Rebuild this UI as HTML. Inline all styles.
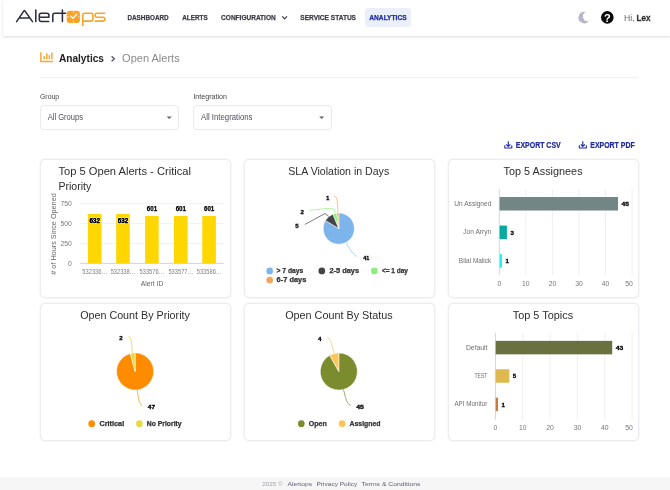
<!DOCTYPE html>
<html><head><meta charset="utf-8">
<style>
*{box-sizing:border-box;margin:0;padding:0}
html,body{width:670px;height:490px;overflow:hidden;background:#fff;font-family:"Liberation Sans",sans-serif;}
body{position:relative}
.abs{position:absolute;white-space:nowrap}
#nav{position:absolute;left:3px;top:0;width:667px;height:35.5px;background:#fff;box-shadow:0 1px 2.5px rgba(0,0,0,.15)}
.nv{position:absolute;top:13.5px;font-size:7.4px;font-weight:bold;color:#3b3b47;letter-spacing:0;line-height:8px;white-space:nowrap}
.card{position:absolute;width:191px;height:138px;background:#fff;border:1px solid #ededf1;border-radius:5px;box-shadow:0 0 2px rgba(60,60,90,.12)}
.sel{position:absolute;top:105px;height:24.5px;width:138.5px;border:1px solid #e9e9ee;border-radius:4px;background:#fff}
.lbl{position:absolute;top:92.5px;font-size:7px;color:#444;line-height:8px}
.selt{position:absolute;top:113px;font-size:8px;color:#5c5c6e;line-height:9px}
#footer{position:absolute;left:0;top:477px;width:670px;height:13px;background:#f6f6f7}
svg text{font-family:"Liberation Sans",sans-serif}
</style></head><body>
<div id="nav"></div>
<!-- CARDS -->
<div class="card" style="left:40px;top:159px;height:138.5px"></div>
<div class="card" style="left:244px;top:159px;height:138.5px"></div>
<div class="card" style="left:448px;top:159px;height:138.5px"></div>
<div class="card" style="left:40px;top:303px"></div>
<div class="card" style="left:244px;top:303px"></div>
<div class="card" style="left:448px;top:303px"></div>
<div class="abs" style="left:40px;top:77px;width:598px;height:1px;background:#efeff2"></div>
<div class="sel" style="left:40px"></div>
<div class="sel" style="left:193px"></div>
<div id="footer"></div>
<svg id="ov" class="abs" style="left:0;top:0;will-change:transform" width="670" height="490" viewBox="0 0 670 490">
<text x="127.4" y="20.4" font-size="7.4" fill="#3a3a46" font-weight="bold" text-anchor="start" textLength="41.3" lengthAdjust="spacingAndGlyphs" stroke="#3a3a46" stroke-width="0.25">DASHBOARD</text>
<text x="182.2" y="20.4" font-size="7.4" fill="#3a3a46" font-weight="bold" text-anchor="start" textLength="25.5" lengthAdjust="spacingAndGlyphs" stroke="#3a3a46" stroke-width="0.25">ALERTS</text>
<text x="221.1" y="20.4" font-size="7.4" fill="#3a3a46" font-weight="bold" text-anchor="start" textLength="54.6" lengthAdjust="spacingAndGlyphs" stroke="#3a3a46" stroke-width="0.25">CONFIGURATION</text>
<path d="M282.2 16.3L284.6 18.8L287 16.3" stroke="#3a3a46" fill="none" stroke-width="1.2" />
<text x="300.3" y="20.4" font-size="7.4" fill="#3a3a46" font-weight="bold" text-anchor="start" textLength="55.7" lengthAdjust="spacingAndGlyphs" stroke="#3a3a46" stroke-width="0.25">SERVICE STATUS</text>
<rect x="365" y="8" width="46" height="19" rx="3.5" fill="#ebeffa"/>
<text x="369.3" y="20.4" font-size="7.4" fill="#1d2a9c" font-weight="bold" text-anchor="start" textLength="37.3" lengthAdjust="spacingAndGlyphs" stroke="#1d2a9c" stroke-width="0.25">ANALYTICS</text>
<path d="M585.7 12.1A5.7 5.7 0 1 0 588.9 20.9A4.7 4.7 0 0 1 585.7 12.1Z" stroke="none" fill="#b7b7ca" stroke-width="1" />
<circle cx="607.3" cy="17.4" r="6.3" fill="#0a0a0a"/>
<text x="607.3" y="21.5" font-size="11" fill="#fff" font-weight="bold" text-anchor="middle" >?</text>
<text x="624" y="20.5" font-size="8.9" fill="#6a6a6a" font-weight="normal" text-anchor="start" textLength="10.6" lengthAdjust="spacingAndGlyphs" >Hi,</text>
<text x="636.6" y="20.5" font-size="8.9" fill="#333" font-weight="bold" text-anchor="start" textLength="14" lengthAdjust="spacingAndGlyphs" stroke="#333" stroke-width="0.3">Lex</text>
<path d="M16.6 21.6L24.1 10.6Q24.4 10.2 24.7 10.6L32.5 21.6M19.6 17.9H29.7" stroke="#2b2d42" fill="none" stroke-width="1.55" stroke-linecap="round" stroke-linejoin="round"/>
<path d="M35.8 10.1V21.6" stroke="#2b2d42" fill="none" stroke-width="1.55" stroke-linecap="round"/>
<path d="M39.3 17.3H48.9V15.2Q48.9 13.2 46.9 13.2H41.3Q39.3 13.2 39.3 15.2V19.4Q39.3 21.4 41.3 21.4H48.7" stroke="#2b2d42" fill="none" stroke-width="1.55" stroke-linecap="round" stroke-linejoin="round"/>
<path d="M52.8 21.6V15.2Q52.8 13.2 54.8 13.2H58.6" stroke="#2b2d42" fill="none" stroke-width="1.55" stroke-linecap="round"/>
<path d="M62.4 10.1V21.6M59.4 13.3H65.6" stroke="#2b2d42" fill="none" stroke-width="1.55" stroke-linecap="round"/>
<rect x="66.7" y="10.8" width="13.3" height="12.2" rx="3" fill="#f7a428"/>
<path d="M70.8 16.2L73 18.3L76.7 14.1" stroke="#fff" fill="none" stroke-width="1.3" stroke-linecap="round" stroke-linejoin="round"/>
<path d="M73.4 11.2V12.8M73.4 21V22.6M67.2 16.9H68.8M78 16.9H79.6" stroke="#fff" fill="none" stroke-width="0.7" />
<path d="M82.8 25.4V15.3Q82.8 13.3 84.8 13.3H90.9Q92.9 13.3 92.9 15.3V19.1Q92.9 21.1 90.9 21.1H83" stroke="#f7a428" fill="none" stroke-width="1.55" stroke-linecap="round" stroke-linejoin="round"/>
<path d="M104.8 13.3H97Q95.1 13.3 95.1 15.2Q95.1 17.2 97 17.2H103Q104.9 17.2 104.9 19.1Q104.9 21.1 103 21.1H95.1" stroke="#f7a428" fill="none" stroke-width="1.55" stroke-linecap="round" stroke-linejoin="round"/>
<path d="M40.9 52.3V61.5H53.2" stroke="#f7a836" fill="none" stroke-width="1.5" />
<rect x="43.3" y="56.3" width="1.6" height="2.8" fill="#f7a836" />
<rect x="46" y="53.4" width="1.6" height="5.7" fill="#f7a836" />
<rect x="48.6" y="55.2" width="1.5" height="3.9" fill="#f7a836" />
<rect x="51.1" y="52.6" width="1.5" height="6.5" fill="#f7a836" />
<text x="58.9" y="62" font-size="10.6" fill="#222" font-weight="bold" text-anchor="start" textLength="45.1" lengthAdjust="spacingAndGlyphs" >Analytics</text>
<path d="M111.6 56.2L114.4 58.7L111.6 61.2" stroke="#4c4c66" fill="none" stroke-width="1.2" />
<text x="122.1" y="62" font-size="10.6" fill="#8a8a8a" font-weight="normal" text-anchor="start" textLength="57.6" lengthAdjust="spacingAndGlyphs" >Open Alerts</text>
<text x="40" y="99.1" font-size="7.2" fill="#444" font-weight="normal" text-anchor="start" textLength="19.1" lengthAdjust="spacingAndGlyphs" >Group</text>
<text x="193.4" y="99.1" font-size="7.2" fill="#444" font-weight="normal" text-anchor="start" textLength="33.6" lengthAdjust="spacingAndGlyphs" >Integration</text>
<text x="47.7" y="119.6" font-size="8.7" fill="#4f4f60" font-weight="normal" text-anchor="start" textLength="35.3" lengthAdjust="spacingAndGlyphs" >All Groups</text>
<text x="201" y="119.6" font-size="8.7" fill="#4f4f60" font-weight="normal" text-anchor="start" textLength="51.5" lengthAdjust="spacingAndGlyphs" >All Integrations</text>
<path d="M166.6 116.4H171.8L169.2 119Z" stroke="none" fill="#666" stroke-width="1" />
<path d="M319.1 116.4H324.3L321.7 119Z" stroke="none" fill="#666" stroke-width="1" />
<path d="M508.3 141.2V146.2M506.2 144.29999999999998L508.3 146.39999999999998L510.40000000000003 144.29999999999998" stroke="#1f2b9e" fill="none" stroke-width="1.1" />
<path d="M504.8 145.29999999999998V147.89999999999998H511.8V145.29999999999998" stroke="#1f2b9e" fill="none" stroke-width="1.05" stroke-linejoin="round"/>
<path d="M582.8 141.2V146.2M580.6999999999999 144.29999999999998L582.8 146.39999999999998L584.9 144.29999999999998" stroke="#1f2b9e" fill="none" stroke-width="1.1" />
<path d="M579.3 145.29999999999998V147.89999999999998H586.3V145.29999999999998" stroke="#1f2b9e" fill="none" stroke-width="1.05" stroke-linejoin="round"/>
<text x="515.8" y="147.6" font-size="8.2" fill="#1f2b9e" font-weight="bold" text-anchor="start" textLength="44.9" lengthAdjust="spacingAndGlyphs" stroke="#1f2b9e" stroke-width="0.2">EXPORT CSV</text>
<text x="590.3" y="147.6" font-size="8.2" fill="#1f2b9e" font-weight="bold" text-anchor="start" textLength="44.4" lengthAdjust="spacingAndGlyphs" stroke="#1f2b9e" stroke-width="0.2">EXPORT PDF</text>
<text x="58.4" y="175" font-size="10.2" fill="#2e2e2e" font-weight="normal" text-anchor="start" textLength="132.6" lengthAdjust="spacingAndGlyphs" >Top 5 Open Alerts - Critical</text>
<text x="58.4" y="190.3" font-size="10.2" fill="#2e2e2e" font-weight="normal" text-anchor="start" textLength="32.8" lengthAdjust="spacingAndGlyphs" >Priority</text>
<text x="288.3" y="175" font-size="10.2" fill="#2e2e2e" font-weight="normal" text-anchor="start" textLength="100.9" lengthAdjust="spacingAndGlyphs" >SLA Violation in Days</text>
<text x="503.6" y="175" font-size="10.2" fill="#2e2e2e" font-weight="normal" text-anchor="start" textLength="79" lengthAdjust="spacingAndGlyphs" >Top 5 Assignees</text>
<text x="80.2" y="318.8" font-size="10.2" fill="#2e2e2e" font-weight="normal" text-anchor="start" textLength="109.7" lengthAdjust="spacingAndGlyphs" >Open Count By Priority</text>
<text x="285.2" y="318.8" font-size="10.2" fill="#2e2e2e" font-weight="normal" text-anchor="start" textLength="107.5" lengthAdjust="spacingAndGlyphs" >Open Count By Status</text>
<text x="512.7" y="318.8" font-size="10.2" fill="#2e2e2e" font-weight="normal" text-anchor="start" textLength="60.5" lengthAdjust="spacingAndGlyphs" >Top 5 Topics</text>
<line x1="80.3" y1="203.8" x2="223.8" y2="203.8" stroke="#efeff2" stroke-width="1"/>
<text x="71.8" y="206.10000000000002" font-size="6.8" fill="#777" font-weight="normal" text-anchor="end" >750</text>
<line x1="80.3" y1="223.7" x2="223.8" y2="223.7" stroke="#efeff2" stroke-width="1"/>
<text x="71.8" y="226.0" font-size="6.8" fill="#777" font-weight="normal" text-anchor="end" >500</text>
<line x1="80.3" y1="243.6" x2="223.8" y2="243.6" stroke="#efeff2" stroke-width="1"/>
<text x="71.8" y="245.9" font-size="6.8" fill="#777" font-weight="normal" text-anchor="end" >250</text>
<line x1="80.3" y1="263.4" x2="223.8" y2="263.4" stroke="#ccd6eb" stroke-width="1"/>
<text x="71.8" y="265.7" font-size="6.8" fill="#777" font-weight="normal" text-anchor="end" >0</text>
<text transform="translate(55.5 234) rotate(-90)" font-size="7.5" fill="#666" text-anchor="middle" textLength="81.4" lengthAdjust="spacingAndGlyphs"># of Hours Since Opened</text>
<rect x="87.9" y="214.0" width="13.6" height="49.39999999999998" fill="#ffd700" />
<text x="94.75" y="223" font-size="6.6" fill="#000" font-weight="bold" text-anchor="middle" textLength="10.4" lengthAdjust="spacingAndGlyphs" stroke="#fff" stroke-width="1.1" paint-order="stroke">632</text>
<text x="94.75" y="223" font-size="6.6" fill="#000" font-weight="bold" text-anchor="middle" textLength="10.4" lengthAdjust="spacingAndGlyphs" stroke="#000" stroke-width="0.25">632</text>
<text x="94.75" y="274.2" font-size="6.9" fill="#808080" font-weight="normal" text-anchor="middle" textLength="24.8" lengthAdjust="spacingAndGlyphs" >532336…</text>
<rect x="116.2" y="214.0" width="13.6" height="49.39999999999998" fill="#ffd700" />
<text x="123.05" y="223" font-size="6.6" fill="#000" font-weight="bold" text-anchor="middle" textLength="10.4" lengthAdjust="spacingAndGlyphs" stroke="#fff" stroke-width="1.1" paint-order="stroke">632</text>
<text x="123.05" y="223" font-size="6.6" fill="#000" font-weight="bold" text-anchor="middle" textLength="10.4" lengthAdjust="spacingAndGlyphs" stroke="#000" stroke-width="0.25">632</text>
<text x="123.05" y="274.2" font-size="6.9" fill="#808080" font-weight="normal" text-anchor="middle" textLength="24.8" lengthAdjust="spacingAndGlyphs" >532338…</text>
<rect x="145.1" y="216.0" width="13.6" height="47.39999999999998" fill="#ffd700" />
<text x="151.95" y="211.3" font-size="6.6" fill="#000" font-weight="bold" text-anchor="middle" textLength="10.4" lengthAdjust="spacingAndGlyphs" stroke="#000" stroke-width="0.25">601</text>
<text x="151.95" y="274.2" font-size="6.9" fill="#808080" font-weight="normal" text-anchor="middle" textLength="24.8" lengthAdjust="spacingAndGlyphs" >533576…</text>
<rect x="174.0" y="216.0" width="13.6" height="47.39999999999998" fill="#ffd700" />
<text x="180.85" y="211.3" font-size="6.6" fill="#000" font-weight="bold" text-anchor="middle" textLength="10.4" lengthAdjust="spacingAndGlyphs" stroke="#000" stroke-width="0.25">601</text>
<text x="180.85" y="274.2" font-size="6.9" fill="#808080" font-weight="normal" text-anchor="middle" textLength="24.8" lengthAdjust="spacingAndGlyphs" >533577…</text>
<rect x="202.3" y="216.0" width="13.6" height="47.39999999999998" fill="#ffd700" />
<text x="209.15" y="211.3" font-size="6.6" fill="#000" font-weight="bold" text-anchor="middle" textLength="10.4" lengthAdjust="spacingAndGlyphs" stroke="#000" stroke-width="0.25">601</text>
<text x="209.15" y="274.2" font-size="6.9" fill="#808080" font-weight="normal" text-anchor="middle" textLength="24.8" lengthAdjust="spacingAndGlyphs" >533586…</text>
<text x="152" y="285.6" font-size="7.4" fill="#666" font-weight="normal" text-anchor="middle" textLength="22.7" lengthAdjust="spacingAndGlyphs" >Alert ID</text>
<path d="M338.8 228.6L338.80 213.00A15.6 15.6 0 1 1 325.46 220.51Z" stroke="#fff" fill="#7cb5ec" stroke-width="0.5" stroke-linejoin="round"/>
<path d="M338.8 228.6L325.46 220.51A15.6 15.6 0 0 1 332.95 214.14Z" stroke="#fff" fill="#434348" stroke-width="0.5" stroke-linejoin="round"/>
<path d="M338.8 228.6L332.95 214.14A15.6 15.6 0 0 1 336.81 213.13Z" stroke="#fff" fill="#90ed7d" stroke-width="0.5" stroke-linejoin="round"/>
<path d="M338.8 228.6L336.81 213.13A15.6 15.6 0 0 1 338.80 213.00Z" stroke="#fff" fill="#f7a35c" stroke-width="0.5" stroke-linejoin="round"/>
<path d="M346.5 242.5C348.5 248 352.5 254 357.1 256.6" stroke="#7cb5ec" fill="none" stroke-width="0.6" />
<path d="M304.8 224.5L325 213.5L328.7 216.3" stroke="#434348" fill="none" stroke-width="0.7" />
<path d="M309.8 210.4C318 209.5 324 208.5 329.6 208.5C334 208.5 334.5 210 335.1 213.5" stroke="#90ed7d" fill="none" stroke-width="0.7" />
<path d="M333.9 196C337.5 196 338 205 337.9 213.5" stroke="#f7a35c" fill="none" stroke-width="0.7" />
<text x="366.3" y="259.6" font-size="6.1" fill="#000" font-weight="bold" text-anchor="middle" textLength="6.1" lengthAdjust="spacingAndGlyphs" stroke="#000" stroke-width="0.3">41</text>
<text x="297" y="227.8" font-size="6.1" fill="#000" font-weight="bold" text-anchor="middle" stroke="#000" stroke-width="0.3">5</text>
<text x="302.3" y="214.1" font-size="6.1" fill="#000" font-weight="bold" text-anchor="middle" stroke="#000" stroke-width="0.3">2</text>
<text x="327.7" y="199.7" font-size="6.1" fill="#000" font-weight="bold" text-anchor="middle" stroke="#000" stroke-width="0.3">1</text>
<circle cx="269.7" cy="270.9" r="3.35" fill="#7cb5ec"/>
<text x="276.6" y="273.29999999999995" font-size="6.3" fill="#333" font-weight="bold" text-anchor="start" textLength="26.6" lengthAdjust="spacingAndGlyphs" stroke="#333" stroke-width="0.25">&gt; 7 days</text>
<circle cx="321.8" cy="270.9" r="3.35" fill="#434348"/>
<text x="329.4" y="273.29999999999995" font-size="6.3" fill="#333" font-weight="bold" text-anchor="start" textLength="29.6" lengthAdjust="spacingAndGlyphs" stroke="#333" stroke-width="0.25">2-5 days</text>
<circle cx="374.3" cy="270.9" r="3.35" fill="#90ed7d"/>
<text x="381.9" y="273.29999999999995" font-size="6.3" fill="#333" font-weight="bold" text-anchor="start" textLength="26.1" lengthAdjust="spacingAndGlyphs" stroke="#333" stroke-width="0.25">&lt;= 1 day</text>
<circle cx="269.7" cy="280.0" r="3.35" fill="#f7a35c"/>
<text x="276.6" y="282.4" font-size="6.3" fill="#333" font-weight="bold" text-anchor="start" textLength="29.7" lengthAdjust="spacingAndGlyphs" stroke="#333" stroke-width="0.25">6-7 days</text>
<path d="M135.1 371.45L135.10 352.85A18.6 18.6 0 1 1 130.38 353.46Z" stroke="#fff" fill="#ff8c00" stroke-width="0.5" stroke-linejoin="round"/>
<path d="M135.1 371.45L130.38 353.46A18.6 18.6 0 0 1 135.10 352.85Z" stroke="#fff" fill="#e3d94a" stroke-width="0.5" stroke-linejoin="round"/>
<path d="M128.2 336.2C131.5 336.5 132 346 132.3 353" stroke="#e9cf4a" fill="none" stroke-width="0.7" />
<path d="M137.2 390C138.5 398 139 404.5 142.4 405.8" stroke="#ff8c00" fill="none" stroke-width="0.7" />
<text x="120.9" y="340.0" font-size="6.1" fill="#000" font-weight="bold" text-anchor="middle" stroke="#000" stroke-width="0.3">2</text>
<text x="151.5" y="409.1" font-size="6.1" fill="#000" font-weight="bold" text-anchor="middle" textLength="7.3" lengthAdjust="spacingAndGlyphs" stroke="#000" stroke-width="0.3">47</text>
<circle cx="91.7" cy="423.7" r="3.35" fill="#ff8c00"/>
<text x="99.5" y="426.09999999999997" font-size="6.3" fill="#333" font-weight="bold" text-anchor="start" textLength="24.7" lengthAdjust="spacingAndGlyphs" stroke="#333" stroke-width="0.25">Critical</text>
<circle cx="139.4" cy="423.7" r="3.35" fill="#e3d94a"/>
<text x="146.8" y="426.09999999999997" font-size="6.3" fill="#333" font-weight="bold" text-anchor="start" textLength="34.8" lengthAdjust="spacingAndGlyphs" stroke="#333" stroke-width="0.25">No Priority</text>
<path d="M338.8 371.5L338.80 352.95A18.55 18.55 0 1 1 329.70 355.34Z" stroke="#fff" fill="#7a8c2e" stroke-width="0.5" stroke-linejoin="round"/>
<path d="M338.8 371.5L329.70 355.34A18.55 18.55 0 0 1 338.80 352.95Z" stroke="#fff" fill="#fdc55a" stroke-width="0.5" stroke-linejoin="round"/>
<path d="M327.3 337.2C330.6 337.8 332 346 334.2 353.4" stroke="#fdc55a" fill="none" stroke-width="0.7" />
<path d="M343.5 389.6C345.5 397 346.5 404 350.7 405.3" stroke="#7a8c2e" fill="none" stroke-width="0.7" />
<text x="319.7" y="340.7" font-size="6.1" fill="#000" font-weight="bold" text-anchor="middle" stroke="#000" stroke-width="0.3">4</text>
<text x="360" y="408.6" font-size="6.1" fill="#000" font-weight="bold" text-anchor="middle" textLength="7.7" lengthAdjust="spacingAndGlyphs" stroke="#000" stroke-width="0.3">45</text>
<circle cx="301.3" cy="423.7" r="3.35" fill="#7a8c2e"/>
<text x="308.7" y="426.09999999999997" font-size="6.3" fill="#333" font-weight="bold" text-anchor="start" textLength="18" lengthAdjust="spacingAndGlyphs" stroke="#333" stroke-width="0.25">Open</text>
<circle cx="342.1" cy="423.7" r="3.35" fill="#fdc55a"/>
<text x="349.5" y="426.09999999999997" font-size="6.3" fill="#333" font-weight="bold" text-anchor="start" textLength="31" lengthAdjust="spacingAndGlyphs" stroke="#333" stroke-width="0.25">Assigned</text>
<line x1="499.3" y1="189" x2="499.3" y2="275" stroke="#ccd6eb" stroke-width="1"/>
<text x="499.3" y="286.1" font-size="6.8" fill="#777" font-weight="normal" text-anchor="middle" >0</text>
<line x1="525.86" y1="189" x2="525.86" y2="275" stroke="#efeff2" stroke-width="1"/>
<text x="525.86" y="286.1" font-size="6.8" fill="#777" font-weight="normal" text-anchor="middle" >10</text>
<line x1="552.42" y1="189" x2="552.42" y2="275" stroke="#efeff2" stroke-width="1"/>
<text x="552.42" y="286.1" font-size="6.8" fill="#777" font-weight="normal" text-anchor="middle" >20</text>
<line x1="578.98" y1="189" x2="578.98" y2="275" stroke="#efeff2" stroke-width="1"/>
<text x="578.98" y="286.1" font-size="6.8" fill="#777" font-weight="normal" text-anchor="middle" >30</text>
<line x1="605.54" y1="189" x2="605.54" y2="275" stroke="#efeff2" stroke-width="1"/>
<text x="605.54" y="286.1" font-size="6.8" fill="#777" font-weight="normal" text-anchor="middle" >40</text>
<line x1="632.1" y1="189" x2="632.1" y2="275" stroke="#efeff2" stroke-width="1"/>
<text x="632.8000000000001" y="286.1" font-size="6.8" fill="#777" font-weight="normal" text-anchor="end" >50</text>
<rect x="499.6" y="197.025" width="118.39999999999999" height="13.5" fill="#728685" />
<text x="491.3" y="205.775" font-size="6.3" fill="#6e6e6e" font-weight="normal" text-anchor="end" textLength="37" lengthAdjust="spacingAndGlyphs" >Un Assigned</text>
<text x="621.5" y="205.975" font-size="6.1" fill="#000" font-weight="bold" text-anchor="start" textLength="7.5" lengthAdjust="spacingAndGlyphs" stroke="#000" stroke-width="0.3">45</text>
<rect x="499.6" y="225.575" width="7.299999999999966" height="13.5" fill="#05aaa0" />
<text x="491.3" y="234.325" font-size="6.3" fill="#6e6e6e" font-weight="normal" text-anchor="end" textLength="28" lengthAdjust="spacingAndGlyphs" >Jon Arryn</text>
<text x="510.4" y="234.52499999999998" font-size="6.1" fill="#000" font-weight="bold" text-anchor="start" stroke="#000" stroke-width="0.3">3</text>
<rect x="499.6" y="254.125" width="2.399999999999989" height="13.5" fill="#1ef4f4" />
<text x="491.3" y="262.875" font-size="6.3" fill="#6e6e6e" font-weight="normal" text-anchor="end" textLength="32.5" lengthAdjust="spacingAndGlyphs" >Bilal Malick</text>
<text x="505.5" y="263.075" font-size="6.1" fill="#000" font-weight="bold" text-anchor="start" stroke="#000" stroke-width="0.3">1</text>
<line x1="495.4" y1="333" x2="495.4" y2="419.6" stroke="#ccd6eb" stroke-width="1"/>
<text x="495.4" y="429.9" font-size="6.8" fill="#777" font-weight="normal" text-anchor="middle" >0</text>
<line x1="522.75" y1="333" x2="522.75" y2="419.6" stroke="#efeff2" stroke-width="1"/>
<text x="522.75" y="429.9" font-size="6.8" fill="#777" font-weight="normal" text-anchor="middle" >10</text>
<line x1="550.1" y1="333" x2="550.1" y2="419.6" stroke="#efeff2" stroke-width="1"/>
<text x="550.1" y="429.9" font-size="6.8" fill="#777" font-weight="normal" text-anchor="middle" >20</text>
<line x1="577.45" y1="333" x2="577.45" y2="419.6" stroke="#efeff2" stroke-width="1"/>
<text x="577.45" y="429.9" font-size="6.8" fill="#777" font-weight="normal" text-anchor="middle" >30</text>
<line x1="604.8" y1="333" x2="604.8" y2="419.6" stroke="#efeff2" stroke-width="1"/>
<text x="604.8" y="429.9" font-size="6.8" fill="#777" font-weight="normal" text-anchor="middle" >40</text>
<line x1="632.15" y1="333" x2="632.15" y2="419.6" stroke="#efeff2" stroke-width="1"/>
<text x="632.85" y="429.9" font-size="6.8" fill="#777" font-weight="normal" text-anchor="end" >50</text>
<rect x="495.7" y="340.84999999999997" width="116.50000000000007" height="13.5" fill="#6b7040" />
<text x="487.4" y="349.59999999999997" font-size="6.3" fill="#6e6e6e" font-weight="normal" text-anchor="end" textLength="21.5" lengthAdjust="spacingAndGlyphs" >Default</text>
<text x="615.7" y="349.79999999999995" font-size="6.1" fill="#000" font-weight="bold" text-anchor="start" textLength="7.5" lengthAdjust="spacingAndGlyphs" stroke="#000" stroke-width="0.3">43</text>
<rect x="495.7" y="369.25" width="13.600000000000033" height="13.5" fill="#dfb94f" />
<text x="487.4" y="378.0" font-size="6.3" fill="#6e6e6e" font-weight="normal" text-anchor="end" textLength="13" lengthAdjust="spacingAndGlyphs" >TEST</text>
<text x="512.8" y="378.2" font-size="6.1" fill="#000" font-weight="bold" text-anchor="start" stroke="#000" stroke-width="0.3">5</text>
<rect x="495.7" y="397.65" width="2.300000000000023" height="13.5" fill="#cd7a3c" />
<text x="487.4" y="406.4" font-size="6.3" fill="#6e6e6e" font-weight="normal" text-anchor="end" textLength="33" lengthAdjust="spacingAndGlyphs" >API Monitor</text>
<text x="501.5" y="406.59999999999997" font-size="6.1" fill="#000" font-weight="bold" text-anchor="start" stroke="#000" stroke-width="0.3">1</text>
<text x="262.3" y="486.2" font-size="5.7" fill="#a3a3ab" font-weight="normal" text-anchor="start" textLength="20.5" lengthAdjust="spacingAndGlyphs" >2025 ©</text>
<text x="287.5" y="486.2" font-size="5.7" fill="#5d5d77" font-weight="normal" text-anchor="start" textLength="24.5" lengthAdjust="spacingAndGlyphs" >Alertops</text>
<text x="316.5" y="486.2" font-size="5.7" fill="#5d5d77" font-weight="normal" text-anchor="start" textLength="40.7" lengthAdjust="spacingAndGlyphs" >Privacy Policy</text>
<text x="361.5" y="486.2" font-size="5.7" fill="#5d5d77" font-weight="normal" text-anchor="start" textLength="59" lengthAdjust="spacingAndGlyphs" >Terms &amp; Conditions</text>
</svg>
</body></html>
